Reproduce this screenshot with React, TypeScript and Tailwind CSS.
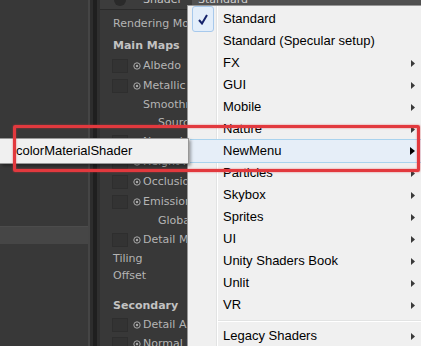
import React from 'react';

const MENU_ITEMS = [
  { label: 'Standard', checked: true },
  { label: 'Standard (Specular setup)' },
  { label: 'FX', sub: true },
  { label: 'GUI', sub: true },
  { label: 'Mobile', sub: true },
  { label: 'Nature', sub: true },
  { label: 'NewMenu', sub: true, active: true },
  { label: 'Particles', sub: true },
  { label: 'Skybox', sub: true },
  { label: 'Sprites', sub: true },
  { label: 'UI', sub: true },
  { label: 'Unity Shaders Book', sub: true },
  { label: 'Unlit', sub: true },
  { label: 'VR', sub: true },
];

const TexSlot = () => <div className="w-[16px] h-[14px] shrink-0 bg-[#333333] border border-[#2e2e2e]" />;

const Dot = () => (
  <svg width="8" height="8" viewBox="0 0 8 8" className="shrink-0">
    <circle cx="4" cy="4" r="3.2" fill="none" stroke="#a9a9a9" strokeWidth="1" />
    <circle cx="4" cy="4" r="1.2" fill="#a9a9a9" />
  </svg>
);

const TexRow = ({ label, h }: { label: string; h: string }) => (
  <div className={`flex items-center ${h}`}>
    <TexSlot />
    <div className="ml-[5px]">
      <Dot />
    </div>
    <span className="ml-[2px] whitespace-nowrap">{label}</span>
  </div>
);

const Arrow = ({ dark }: { dark?: boolean }) =>
  dark ? (
    <svg width="5" height="8" viewBox="0 0 5 8">
      <polygon points="0,0 5,4 0,8" fill="#000" />
    </svg>
  ) : (
    <svg width="4" height="7" viewBox="0 0 4 7">
      <polygon points="0,0 4,3.5 0,7" fill="#3a3a3a" />
    </svg>
  );

export default function App() {
  return (
    <div className="relative w-[421px] h-[346px] overflow-hidden bg-[#383838] flex font-['DejaVu_Sans',sans-serif] text-[11px] text-[#b4b4b4]">
      {/* hierarchy panel */}
      <div className="w-[88px] shrink-0 flex flex-col">
        <div className="h-[226px]" />
        <div className="h-[18px] bg-[#464646] border-t border-[#4c4c4c]" />
      </div>
      {/* splitter */}
      <div className="w-[2px] shrink-0 bg-[#454545]" />
      <div className="w-[3px] shrink-0 bg-[#2d2d2d]" />
      <div className="w-[4px] shrink-0 bg-[#1f1f1f]" />
      <div className="w-[3px] shrink-0 bg-[#2f2f2f]" />

      {/* inspector */}
      <div className="flex-1 min-w-0 overflow-hidden flex flex-col">
        <div className="h-[10px] shrink-0 overflow-hidden border-b border-[#2a2a2a] bg-[#3c3c3c] flex">
          <div className="-mt-[8px] h-[16px] flex items-center pl-[14px]">
            <div className="w-[12px] h-[12px] shrink-0 rounded-full bg-[#2a2a2a]" />
            <span className="ml-[17px] text-[#c4c4c4]">Shader</span>
            <div className="ml-[10px] h-[16px] w-[240px] shrink-0 rounded-[3px] bg-[#515151] flex items-center pl-[6px] text-[#d0d0d0]">Standard</div>
          </div>
        </div>
        <div className="pl-[13px]">
          <div className="mt-[4px] h-[20px] flex items-center whitespace-nowrap">Rendering Mode</div>
          <div className="mt-[2px] h-[20px] flex items-center font-bold text-[#c2c2c2]">Main Maps</div>
          <div className="-ml-[1px]">
            <TexRow label="Albedo" h="h-[20px]" />
            <TexRow label="Metallic" h="h-[20px]" />
            <div className="h-[18px] flex items-center pl-[31px]">Smoothness</div>
            <div className="h-[18px] flex items-center pl-[46px]">Source</div>
            <TexRow label="Normal Map" h="h-[20px]" />
            <TexRow label="Height Map" h="h-[20px]" />
            <TexRow label="Occlusion" h="h-[20px]" />
            <TexRow label="Emission" h="h-[20px]" />
            <div className="h-[18px] flex items-center pl-[46px] whitespace-nowrap">Global Illumination</div>
            <TexRow label="Detail Mask" h="h-[20px]" />
          </div>
          <div className="h-[18px] flex items-center">Tiling</div>
          <div className="h-[16px] flex items-center">Offset</div>
          <div className="mt-[12px] h-[20px] flex items-center font-bold text-[#c2c2c2]">Secondary</div>
          <div className="-ml-[1px]">
            <TexRow label="Detail Albedo x2" h="h-[18px]" />
            <TexRow label="Normal Map" h="h-[20px]" />
          </div>
        </div>
      </div>

      {/* shader dropdown menu */}
      <div className="absolute left-[187px] top-[5px] w-[240px] h-[360px] bg-[#f0f0f0] border border-[#979797] shadow-[2px_2px_3px_rgba(0,0,0,0.35)] font-['Liberation_Sans',Arial,sans-serif] text-[13px] text-black">
        <div className="absolute left-[28px] top-0 bottom-0 w-[1px] bg-[#e2e3e3]" />
        <div className="absolute left-[29px] top-0 bottom-0 w-[1px] bg-white" />
        <div className="relative pt-[2px]">
          {MENU_ITEMS.map((it) => (
            <div
              key={it.label}
              className={`h-[22px] mx-[2px] flex items-center ${
                it.active ? 'border-y border-[#a9d3ee] bg-[#e6eef8] -mt-[1px] h-[24px] -mb-[1px]' : ''
              }`}
            >
              <div className="w-[25px] h-[22px] flex items-center justify-center">
                {it.checked && (
                  <div className="w-[22px] h-[26px] shrink-0 rounded-[3px] border border-[#a7c9ec] bg-[#e3eefa] flex items-center justify-center">
                    <svg width="10" height="11" viewBox="0 0 10 11">
                      <path d="M1 6 L4 9.5 L9 1" fill="none" stroke="#15236b" strokeWidth="2" />
                    </svg>
                  </div>
                )}
              </div>
              <span className="ml-[8px] flex-1 whitespace-nowrap">{it.label}</span>
              {it.sub && (
                <div className="mr-[9px] flex items-center">
                  <Arrow dark={it.active} />
                </div>
              )}
            </div>
          ))}
          <div className="h-[9px] pl-[30px] flex flex-col justify-center">
            <div className="h-[1px] bg-[#e2e3e3]" />
            <div className="h-[1px] bg-white" />
          </div>
          <div className="h-[22px] mx-[2px] flex items-center">
            <div className="w-[25px]" />
            <span className="ml-[8px] flex-1">Legacy Shaders</span>
            <div className="mr-[9px] flex items-center">
              <Arrow />
            </div>
          </div>
        </div>
      </div>

      {/* submenu */}
      <div className="absolute left-0 top-[138px] w-[189px] h-[26px] bg-[#f0f0f0] border-y border-r border-[#979797] shadow-[2px_2px_3px_rgba(0,0,0,0.35)] flex items-center pl-[16px] font-['Liberation_Sans',Arial,sans-serif] text-[13px] text-black">
        colorMaterialShader
      </div>

      {/* annotation frame */}
      <div className="absolute left-[13px] top-[125px] w-[407px] h-[47px] border-[3px] border-[#e2393e] rounded-[2px] shadow-[0_0_2px_rgba(226,57,62,0.7),inset_0_0_2px_rgba(226,57,62,0.7)]" />
    </div>
  );
}
